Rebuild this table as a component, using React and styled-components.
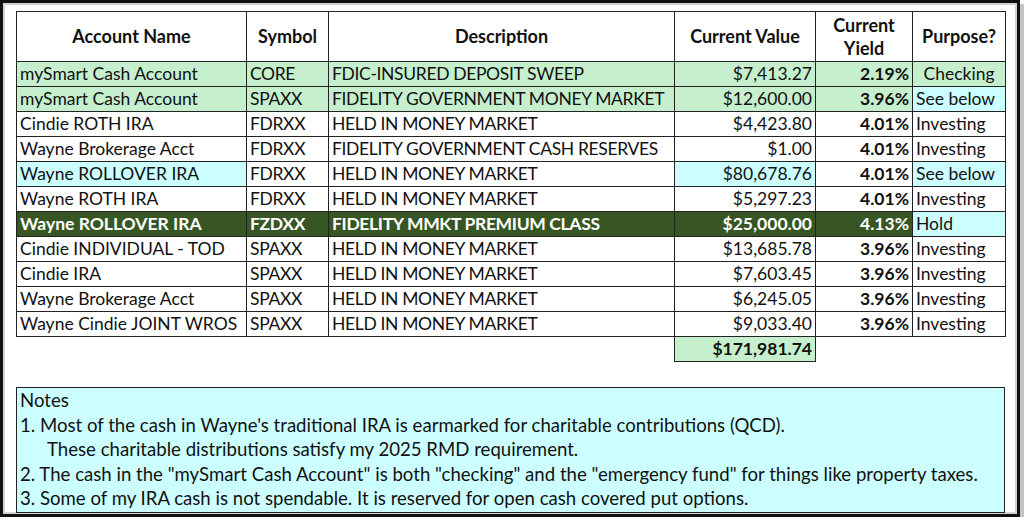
import React from 'react'
import styled, { createGlobalStyle } from 'styled-components'

const GlobalStyle = createGlobalStyle`
	body {
		margin: 0;
		background: #ffffff;
		font-family: Lato, 'Noto Sans', sans-serif;
	}
`

const GREEN = '#c6efce'
const CYAN = '#ccffff'
const DARK = '#375623'

const Frame = styled.div`
	box-sizing: border-box;
	width: 1020px;
	height: 517px;
	border: 3px solid #111;
	box-shadow: inset 0 0 0 2px #d4d4d4, 4px 4px 0 #c4c4c4;
	padding: 8px 0 0 13px;
	background: #fff;
`

const Table = styled.table`
	border-collapse: collapse;
	table-layout: fixed;
	width: 989px;
	font-size: 17.5px;
	color: #111;
`

const HeadCell = styled.th`
	height: 49px;
	padding: 0 4px;
	border: 1px solid #222;
	font-size: 18px;
	font-weight: 700;
	text-align: center;
	line-height: 23px;
`

const Cell = styled.td`
	height: 24px;
	padding: 0 3px;
	border: 1px solid #222;
	white-space: nowrap;
	overflow: hidden;
	line-height: 24px;
	letter-spacing: ${p => (p.$caps ? '-0.35px' : '0')};
	background: ${p => p.$bg || 'transparent'};
	color: ${p => (p.$bg === DARK ? '#fff' : '#111')};
	font-weight: ${p => (p.$bold || p.$bg === DARK ? 700 : 400)};
	text-align: ${p => p.$align || 'left'};
`

const EmptyCell = styled.td`
	border: none;
`

const Notes = styled.div`
	box-sizing: border-box;
	width: 989px;
	height: 126px;
	margin-top: 25px;
	border: 1px solid #222;
	background: ${CYAN};
	padding: 0 3px;
	font-size: 18.6px;
	line-height: 24.6px;
	color: #111;
`

const NoteLine = styled.div`
	padding-left: ${p => (p.$indent ? '27px' : '0')};
`

const rows = [
	{ name: 'mySmart Cash Account', sym: 'CORE', desc: 'FDIC-INSURED DEPOSIT SWEEP', value: '$7,413.27', yld: '2.19%', purpose: 'Checking', bg: [GREEN, GREEN, GREEN, GREEN, GREEN, GREEN], center: true },
	{ name: 'mySmart Cash Account', sym: 'SPAXX', desc: 'FIDELITY GOVERNMENT MONEY MARKET', value: '$12,600.00', yld: '3.96%', purpose: 'See below', bg: [GREEN, GREEN, GREEN, GREEN, GREEN, CYAN] },
	{ name: 'Cindie ROTH IRA', sym: 'FDRXX', desc: 'HELD IN MONEY MARKET', value: '$4,423.80', yld: '4.01%', purpose: 'Investing', bg: [] },
	{ name: 'Wayne Brokerage Acct', sym: 'FDRXX', desc: 'FIDELITY GOVERNMENT CASH RESERVES', value: '$1.00', yld: '4.01%', purpose: 'Investing', bg: [] },
	{ name: 'Wayne ROLLOVER IRA', sym: 'FDRXX', desc: 'HELD IN MONEY MARKET', value: '$80,678.76', yld: '4.01%', purpose: 'See below', bg: [CYAN, null, null, CYAN, null, CYAN] },
	{ name: 'Wayne ROTH IRA', sym: 'FDRXX', desc: 'HELD IN MONEY MARKET', value: '$5,297.23', yld: '4.01%', purpose: 'Investing', bg: [] },
	{ name: 'Wayne ROLLOVER IRA', sym: 'FZDXX', desc: 'FIDELITY MMKT PREMIUM CLASS', value: '$25,000.00', yld: '4.13%', purpose: 'Hold', bg: [DARK, DARK, DARK, DARK, DARK, CYAN] },
	{ name: 'Cindie INDIVIDUAL - TOD', sym: 'SPAXX', desc: 'HELD IN MONEY MARKET', value: '$13,685.78', yld: '3.96%', purpose: 'Investing', bg: [] },
	{ name: 'Cindie IRA', sym: 'SPAXX', desc: 'HELD IN MONEY MARKET', value: '$7,603.45', yld: '3.96%', purpose: 'Investing', bg: [] },
	{ name: 'Wayne Brokerage Acct', sym: 'SPAXX', desc: 'HELD IN MONEY MARKET', value: '$6,245.05', yld: '3.96%', purpose: 'Investing', bg: [] },
	{ name: 'Wayne Cindie JOINT WROS', sym: 'SPAXX', desc: 'HELD IN MONEY MARKET', value: '$9,033.40', yld: '3.96%', purpose: 'Investing', bg: [] },
]

const widths = [230, 82, 346, 141, 97, 93]

const App = () => (
	<>
		<GlobalStyle />
		<Frame>
			<Table>
				<colgroup>
					{widths.map((w, i) => (
						<col key={i} style={{ width: w }} />
					))}
				</colgroup>
				<thead>
					<tr>
						<HeadCell>Account Name</HeadCell>
						<HeadCell>Symbol</HeadCell>
						<HeadCell>Description</HeadCell>
						<HeadCell>Current Value</HeadCell>
						<HeadCell>
							Current
							<br />
							Yield
						</HeadCell>
						<HeadCell>Purpose?</HeadCell>
					</tr>
				</thead>
				<tbody>
					{rows.map((r, i) => (
						<tr key={i}>
							<Cell $bg={r.bg[0]}>{r.name}</Cell>
							<Cell $bg={r.bg[1]} $caps>{r.sym}</Cell>
							<Cell $bg={r.bg[2]} $caps>{r.desc}</Cell>
							<Cell $bg={r.bg[3]} $align="right">{r.value}</Cell>
							<Cell $bg={r.bg[4]} $align="right" $bold>{r.yld}</Cell>
							<Cell $bg={r.bg[5]} $align={r.center ? 'center' : 'left'}>{r.purpose}</Cell>
						</tr>
					))}
					<tr>
						<EmptyCell />
						<EmptyCell />
						<EmptyCell />
						<Cell $bg={GREEN} $align="right" $bold>$171,981.74</Cell>
						<EmptyCell />
						<EmptyCell />
					</tr>
				</tbody>
			</Table>
			<Notes>
				<NoteLine>Notes</NoteLine>
				<NoteLine>1. Most of the cash in Wayne's traditional IRA is earmarked for charitable contributions (QCD).</NoteLine>
				<NoteLine $indent>These charitable distributions satisfy my 2025 RMD requirement.</NoteLine>
				<NoteLine>2. The cash in the "mySmart Cash Account" is both "checking" and the "emergency fund" for things like property taxes.</NoteLine>
				<NoteLine>3. Some of my IRA cash is not spendable. It is reserved for open cash covered put options.</NoteLine>
			</Notes>
		</Frame>
	</>
)

export default App
